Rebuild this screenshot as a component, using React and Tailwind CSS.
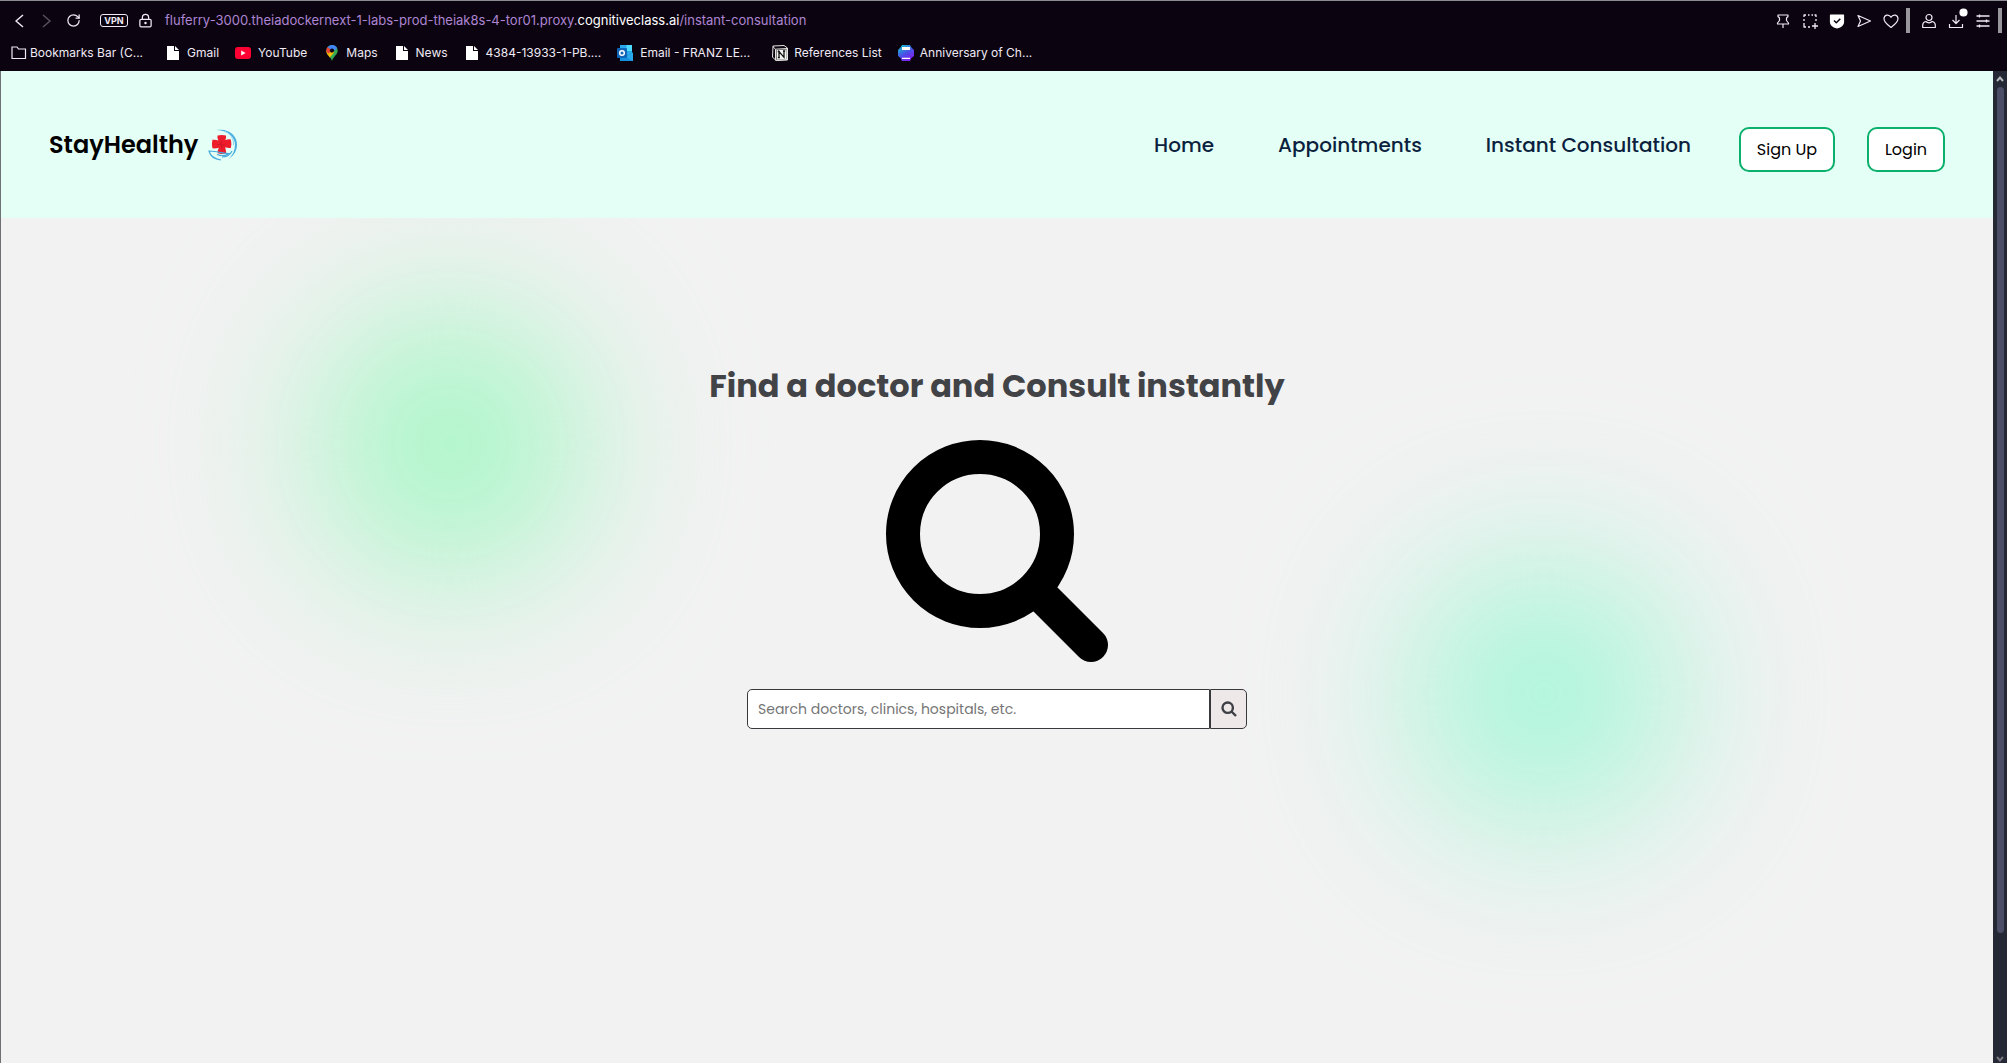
import React from "react";
import { LockKeyhole, RotateCw } from "lucide-react";

const barIcon = "h-4 w-4 shrink-0";

function Doc() {
  return (
    <svg viewBox="0 0 12 14" className="h-3.5 w-3 shrink-0" aria-hidden="true">
      <path d="M0 0h7v5h5v9H0z" fill="#fff" />
      <path d="M8 0l4 4H8z" fill="#fff" />
    </svg>
  );
}

function YouTube() {
  return (
    <svg viewBox="0 0 16 12" className="h-3 w-4 shrink-0" aria-hidden="true">
      <rect width="16" height="12" rx="3" fill="#ff0033" />
      <path d="M6.2 3.6v4.8L10.6 6z" fill="#fff" />
    </svg>
  );
}

function MapPin() {
  return (
    <svg viewBox="0 0 12 16" className="h-4 w-3 shrink-0" aria-hidden="true">
      <path d="M6 0a5.7 5.7 0 0 1 5.7 5.7c0 4-4.3 5.3-5.7 10.3C4.6 11 .3 9.7.3 5.7A5.7 5.7 0 0 1 6 0z" fill="#34a853" />
      <path d="M1.8 9.8L7.7 4.2l.4 3.2-4.3 5C3 11.3 2.3 10.5 1.8 9.8z" fill="#fbbc04" />
      <path d="M.3 5.7c0 1.5.5 3 1.5 4.2L6 5.5z" fill="#fbbc04" />
      <path d="M1.6 2.1A5.7 5.7 0 0 1 11.2 3.3L6 7.2z" fill="#4285f4" />
      <path d="M1.6 2.1L6 5.7 2.5 8.5.5 7C0 5 .6 3.3 1.6 2.1z" fill="#ea4335" />
      <circle cx="6" cy="5.6" r="2.1" fill="#0b0410" />
    </svg>
  );
}

function Outlook() {
  return (
    <svg viewBox="0 0 16 16" className={barIcon} aria-hidden="true">
      <path d="M3 0h12v10H3z" fill="#28a8ea" />
      <path d="M9.5 0H15v6H9.5z" fill="#50d9ff" />
      <path d="M3 8l6.5 3L16 7.5V16H3z" fill="#1490df" />
      <path d="M16 7.5V16L8 11.5z" fill="#28a8ea" />
      <rect y="3" width="10" height="10" rx="1" fill="#0f65b8" />
      <circle cx="5" cy="8" r="2.3" fill="none" stroke="#fff" strokeWidth="1.5" />
    </svg>
  );
}

function Notion() {
  return (
    <svg viewBox="0 0 16 16" className={barIcon} aria-hidden="true">
      <path d="M1 1L12 .5l3.5 2.5v12L4 15.5.5 12z" fill="#0b0410" stroke="#e5e5e0" strokeWidth="1" strokeLinejoin="round" />
      <path d="M3.5 4.2l11.5-.7v11l-11.5.8z" fill="#0b0410" stroke="#e5e5e0" strokeWidth="1" />
      <path d="M4.5 5l10-.6v9.7l-10 .6z" fill="#f2f2ee" />
      <path d="M3.5 4.2L.8 1.5" stroke="#e5e5e0" strokeWidth="1" />
      <path d="M7 12.5V6.5l5 5.8V6M5.8 6.5h2M11 6h2.2M5.9 12.7h2" stroke="#111" strokeWidth="1.3" fill="none" />
    </svg>
  );
}

function Printer() {
  return (
    <svg viewBox="0 0 16 16" className={barIcon} aria-hidden="true">
      <defs>
        <linearGradient id="printer" x1="0.2" y1="0" x2="0.8" y2="1">
          <stop offset="0" stopColor="#12c3cf" />
          <stop offset="0.5" stopColor="#4b50e6" />
          <stop offset="1" stopColor="#8a16f2" />
        </linearGradient>
      </defs>
      <path d="M4 0h8l1.5 2.5L16 5v6l-2.5 2L12 16H4l-1.5-3L0 11V5l2.5-2.5z" fill="url(#printer)" />
      <path d="M4 2h8v3H4zM4 12.8h8V14H4z" fill="#fff" />
    </svg>
  );
}

const bookmarks = [
  { label: "Gmail", Icon: Doc, cls: "ml-6 gap-2" },
  { label: "YouTube", Icon: YouTube, cls: "ml-4 gap-[7px]" },
  { label: "Maps", Icon: MapPin, cls: "ml-[19px] gap-2" },
  { label: "News", Icon: Doc, cls: "ml-[18px] gap-2" },
  { label: "4384-13933-1-PB....", Icon: Doc, cls: "ml-[18px] gap-2" },
  { label: "Email - FRANZ LE...", Icon: Outlook, cls: "ml-4 gap-[7px]" },
  { label: "References List", Icon: Notion, cls: "ml-[22px] gap-1.5" },
  { label: "Anniversary of Ch...", Icon: Printer, cls: "ml-4 gap-1.5" },
];

function Tool({ label, children }) {
  return (
    <button type="button" aria-label={label} className="flex h-5 w-4 items-center justify-center">
      <svg viewBox="0 0 16 16" className="h-4 w-4 overflow-visible" fill="none" stroke="#f1e8f5" strokeWidth="1.2" strokeLinejoin="round">
        {children}
      </svg>
    </button>
  );
}

function BrowserBar() {
  return (
    <header className="h-[71px] shrink-0 border-t border-[#8d8b92] bg-[#0b0410] font-['Inter',sans-serif] text-[#f0eaf5]">
      <div className="flex h-[39px] items-center pl-3">
        <Tool label="Back"><path d="M11 2L4 8l7 6" strokeWidth="1.5" /></Tool>
        <button type="button" aria-label="Forward" className="ml-2.5">
          <svg viewBox="0 0 16 16" className="h-4 w-4" fill="none" stroke="#57515e" strokeWidth="1.5"><path d="M5 2l7 6-7 6" /></svg>
        </button>
        <button type="button" aria-label="Reload" className="ml-3"><RotateCw size={15} strokeWidth={2} /></button>
        <span className="ml-[19px] flex h-[13px] w-7 items-center justify-center rounded-[3px] border border-[#f0eaf5] text-[9px] font-bold">VPN</span>
        <LockKeyhole className="ml-2.5" size={15} strokeWidth={2} />
        <a href="#address" className="ml-3 whitespace-nowrap text-[13px] text-[#ae84d3]">
          fluferry-3000.theiadockernext-1-labs-prod-theiak8s-4-tor01.proxy.<span className="text-white">cognitiveclass.ai</span>/instant-consultation
        </a>
        <div className="ml-auto flex items-center gap-[11px]">
          <Tool label="Pin"><path d="M3 2h10v1.5L11.5 5v2.5L13.5 10v1h-11v-1l2-2.5V5L3 3.5zM8 11v4" /></Tool>
          <Tool label="Snapshot"><path d="M2 4V2h2M6 2h1.5M9.5 2H11M12.5 2H14v2M14 6v2M2 6v2M2 10v4h2M6 14h2M13 10v6M10 13h6" strokeWidth="1.3" /></Tool>
          <Tool label="Protection"><path d="M1.5 2h13v7c0 3-3 5-6.5 6-3.5-1-6.5-3-6.5-6z" fill="#fff" stroke="#fff" /><path d="M5 7.5l2.3 2.3 4-4" stroke="#0b0410" strokeWidth="1.5" /></Tool>
          <Tool label="Send"><path d="M2 2.5L14.5 8 2 13.5 4.5 8z" /></Tool>
          <Tool label="Favourite"><path d="M8 14.5C5 12 1 9.5 1 5.8 1 1.7 6 .7 8 4.3 10 .7 15 1.7 15 5.8c0 3.7-4 6.2-7 8.7z" /></Tool>
          <span className="-ml-1 h-[25px] w-1 bg-[#99969d]" />
          <Tool label="Profile"><circle cx="8" cy="4.5" r="3" /><path d="M4.8 8.5C3 9 1.7 10 1.7 12v2.5h12.6V12c0-2-1.3-3-3.1-3.5C9.5 10.2 6.5 10.2 4.8 8.5z" /></Tool>
          <Tool label="Downloads"><path d="M8 2v8M4.500 7L8 10.5 11.5 7M1.5 11v3.5h13V11" /><circle cx="15.5" cy="-.5" r="3.5" fill="#fff" stroke="#fff" /></Tool>
          <Tool label="Settings"><path d="M1.5 3h13M1.5 8h13M1.5 13h13M4.5 1.5v3M11.5 6.5v3M4.5 11.5v3" strokeWidth="1.3" /></Tool>
          <span className="-ml-1 mr-[5px] h-[25px] w-1 bg-[#99969d]" />
        </div>
      </div>
      <nav aria-label="Bookmarks" className="flex h-[25px] items-center whitespace-nowrap pl-3 text-xs">
        <a href="#bar" className="flex items-center gap-1">
          <svg viewBox="0 0 14 12" className="h-3 w-3.5 overflow-visible" fill="none" stroke="#f0eaf5" strokeWidth="1.2" aria-hidden="true"><path d="M0 0h5l1.5 2H13.5v9.5H0z" /></svg>
          Bookmarks Bar (C...
        </a>
        {bookmarks.map(({ label, Icon, cls }) => (
          <a key={label} href="#bookmark" className={"flex items-center " + cls}><Icon />{label}</a>
        ))}
      </nav>
    </header>
  );
}

function CareLogo() {
  return (
    <svg viewBox="0 0 30 32" className="h-8 w-[30px]" aria-hidden="true">
      <path d="M9 1C20-1 29 6 29 15.5c0 6-3 11-8 14C25 26 27 21 27 15.5 27 8 20 1.5 9 1z" fill="#4aaee0" />
      <path d="M17 2.500c6 2.500 9 7.500 8.500 13.500" fill="none" stroke="#8fd3f0" strokeWidth="1" />
      <path d="M9.500 6.500q4.500-1 8.500 0 .5 2-.8 4.500 3-1 5.600-.6 1.200 4.500 0 8.600-2.800.4-5.600-.7.8 3 1 6-4.500 1.200-8.400 0-.4-2.700 1-5.500-3 .9-6.400.5-1-4.500 0-8.500 3-.4 6 .6Q9 8.500 9.500 6.500z" fill="#ee1c2b" />
      <path d="M13.500 12l-.8 3.200-3 .5M13 15.500l3.500.8M13.500 16l.3 3" stroke="#b31320" strokeWidth=".6" fill="none" />
      <path d="M9 25.500c4 1.500 9 1.500 12-1-3 0-8-1-11-1.500-3.500-.5-7-1-9-1 1 4 5 8 12 9" fill="none" stroke="#45a9dc" strokeWidth="1.2" />
      <path d="M24 22c-2 4-6 6-10 6" fill="none" stroke="#45a9dc" strokeWidth="1.2" />
    </svg>
  );
}

const authButton = "mt-2 h-[45px] rounded-[10px] border-2 border-[#0cb06d] bg-white pt-px text-base font-normal text-black";

function SiteNav() {
  return (
    <nav aria-label="Main" className="flex h-[147px] items-center justify-between bg-[#e4fff5] px-12 pt-px">
      <a href="#home" className="flex items-center gap-2.5 text-2xl font-semibold text-black">StayHealthy<CareLogo /></a>
      <div className="flex items-center whitespace-nowrap text-xl font-medium text-[#0c1f3f]">
        <a href="#home">Home</a>
        <a href="#appointments" className="ml-16">Appointments</a>
        <a href="#consult" className="ml-16">Instant Consultation</a>
        <button type="button" className={"ml-12 w-24 " + authButton}>Sign Up</button>
        <button type="button" className={"ml-8 w-[78px] " + authButton}>Login</button>
      </div>
    </nav>
  );
}

function Magnifier() {
  return (
    <svg viewBox="0 0 224 224" className="h-56 w-56" aria-hidden="true">
      <circle cx="95" cy="95" r="77" fill="none" stroke="#000" strokeWidth="34" />
      <path d="M158 158l48 48" stroke="#000" strokeWidth="34" strokeLinecap="round" />
    </svg>
  );
}

function Glow({ cls }) {
  return <div aria-hidden="true" className={"absolute h-[260px] w-[260px] rounded-full blur-[84px] " + cls} />;
}

export default function App() {
  return (
    <div className="flex h-screen flex-col overflow-hidden bg-[#0b0410] font-['Poppins','Inter',sans-serif]">
      <BrowserBar />
      <div className="flex min-h-0 grow">
        <div className="flex min-w-0 grow flex-col border-l border-[#6f7074] bg-[#f2f2f2]">
          <SiteNav />
          <main className="relative flex grow flex-col items-center overflow-hidden pt-36">
            <Glow cls="left-[16%] top-[96px] bg-[#9ff7c1]" />
            <Glow cls="right-[16%] top-[346px] bg-[#a0f7d6]" />
            <h1 className="relative text-[32px] leading-12 font-bold text-[#424347]">Find a doctor and Consult instantly</h1>
            <div className="relative mt-[29px]"><Magnifier /></div>
            <form className="relative mt-[26px] flex h-10 w-[500px]" onSubmit={(e) => e.preventDefault()}>
              <input type="text" aria-label="Search doctors" placeholder="Search doctors, clinics, hospitals, etc." className="min-w-0 grow rounded-l-[5px] border border-[#38393d] bg-white px-2.5 text-sm text-black placeholder:text-[#757575]" />
              <button type="submit" aria-label="Search" className="flex w-[37px] items-center justify-center rounded-r-[5px] border border-[#38393d] bg-[#eee8e8]">
                <svg viewBox="0 0 16 16" className="h-4 w-4" fill="none" stroke="#3d3f44" strokeWidth="2.4" aria-hidden="true">
                  <circle cx="6.7" cy="6.7" r="5.2" />
                  <path d="M10.5 10.5L15 15" />
                </svg>
              </button>
            </form>
          </main>
        </div>
        <div aria-hidden="true" className="flex w-3.5 shrink-0 flex-col items-center bg-[#252935]">
          <svg viewBox="0 0 8 6" className="mt-1 h-2 w-2" fill="none" stroke="#b9babd" strokeWidth="2"><path d="M1 5l3-3.5L7 5" /></svg>
          <div className="mt-1 h-[846px] w-[7px] rounded-full bg-[#4b4e66]" />
          <svg viewBox="0 0 8 6" className="mt-auto h-2 w-2" fill="none" stroke="#77797e" strokeWidth="2"><path d="M1 1l3 3.5L7 1" /></svg>
        </div>
      </div>
    </div>
  );
}
